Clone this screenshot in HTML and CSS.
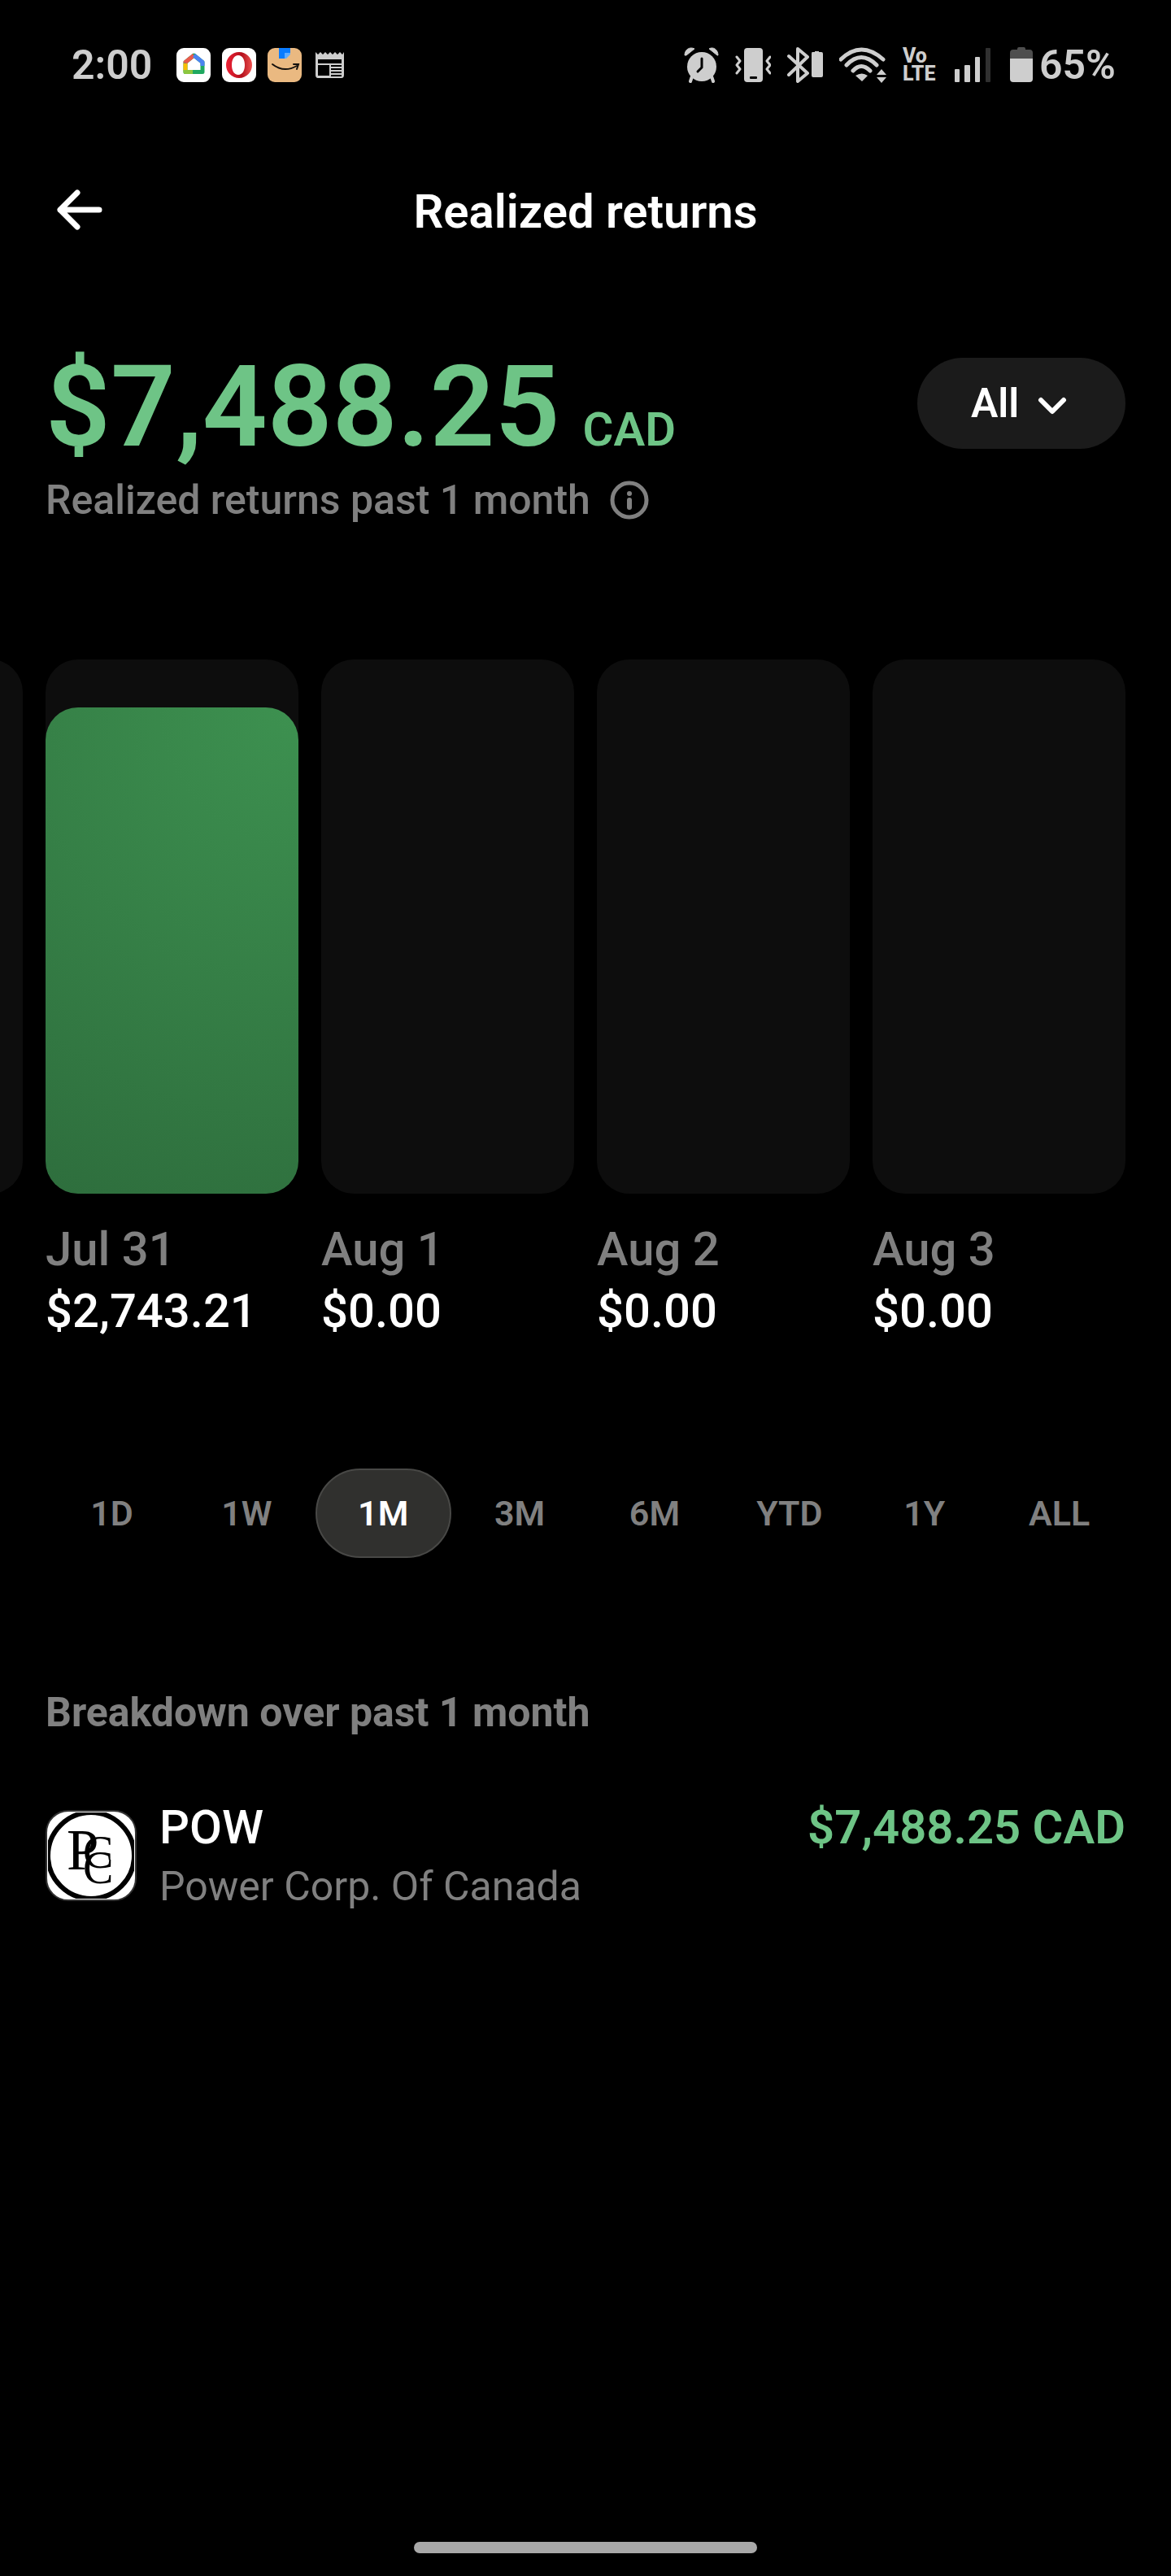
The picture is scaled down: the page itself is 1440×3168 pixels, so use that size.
FILE: index.html
```html
<!DOCTYPE html>
<html lang="en">
<head>
  <meta charset="UTF-8">
  <meta name="viewport" content="width=device-width, initial-scale=1.0">
  <title>Realized returns</title>
  <link rel="stylesheet" href="styles.css">
</head>
<body>
  <div class="status-bar">
    <span class="time">2:00</span>
    <div class="apps">
      <svg width="42" height="42" viewBox="0 0 42 42">
        <rect width="42" height="42" rx="9" fill="#fff"/>
        <path d="M21.500 9L32 17.500V29.500H11V17.500z" fill="none" stroke="#1fa860" stroke-width="5" stroke-linejoin="round"/>
        <path d="M11 19v9" stroke="#fbbc04" stroke-width="5"/>
        <path d="M11 27v2.500h9" stroke="#8cc63f" stroke-width="5" fill="none" stroke-linejoin="round"/>
        <path d="M11 18.500v-1L21.500 9" stroke="#ea5a4c" stroke-width="5" fill="none" stroke-linejoin="round"/>
        <path d="M21.500 9L32 17.500V22" stroke="#4b83f0" stroke-width="5" fill="none" stroke-linejoin="round"/>
      </svg>
      <svg width="42" height="42" viewBox="0 0 42 42">
        <defs>
          <linearGradient id="opera" x1="0" y1="0" x2="1" y2="0">
            <stop offset="0" stop-color="#ee2236"/>
            <stop offset="0.600" stop-color="#b3101c"/>
            <stop offset="1" stop-color="#ef5350"/>
          </linearGradient>
        </defs>
        <rect width="42" height="42" rx="9" fill="#fff"/>
        <path fill-rule="evenodd" fill="url(#opera)" d="M21 5a16 16 0 1 0 0 32a16 16 0 1 0 0-32zM20 9c5 0 8 5 8 12s-3 12-8 12s-8-5-8-12s3-12 8-12z"/>
      </svg>
      <svg width="42" height="42" viewBox="0 0 42 42">
        <rect width="42" height="42" rx="9" fill="#eab981"/>
        <path d="M14 0h14v6l-7 7h-7z" fill="#0a7cff"/>
        <path d="M28 6v2l-5 5h-2V6z" fill="#62adff"/>
        <path d="M6 20q14 11 30 2" stroke="#15110d" stroke-width="2" fill="none" stroke-linecap="round"/>
        <path d="M32 20l6 0l-2 6" stroke="#15110d" stroke-width="2" fill="none" stroke-linecap="round"/>
      </svg>
      <svg width="42" height="42" viewBox="0 0 42 42">
        <path fill="#cecece" fill-rule="evenodd" d="M3 5l3 3l3-3l3 3l3-3l3 3l3-3l3 3l3-3l3 3l3-3l3 3l2-3v28q0 4-3 4H6q-3 0-3-4zM6 14v5h29v-5zM6 21v13h14V21zM22 21v2h13v-2zM22 25v2h13v-2zM22 29v2h13v-2zM22 33v2h13v-2z"/>
      </svg>
    </div>
    <div class="system">
      <svg width="44" height="44" viewBox="0 0 44 44" fill="#cecece">
        <circle cx="23" cy="24" r="18"/>
        <path d="M11 36l-2 6M35 36l2 6" stroke="#cecece" stroke-width="4" stroke-linecap="round"/>
        <path d="M2 10C2 3 8-1 14 2L4 10zM43 10C43 3 37-1 32 2L42 10z" stroke="#cecece" stroke-width="1" stroke-linejoin="round"/>
        <path d="M23 14v11l-5 5" stroke="#000" stroke-width="3" fill="none" stroke-linecap="round"/>
      </svg>
      <svg width="44" height="44" viewBox="0 0 44 44" fill="none">
        <rect x="11" y="1" width="23" height="42" rx="4" fill="#cecece"/>
        <rect x="18" y="36" width="9" height="3" rx="1" fill="#000"/>
        <path d="M2 12l4 5l-4 5l4 5l-4 5M43 12l-4 5l4 5l-4 5l4 5" stroke="#cecece" stroke-width="3" stroke-linecap="round" stroke-linejoin="round"/>
      </svg>
      <svg width="44" height="44" viewBox="0 0 44 44" fill="none">
        <path d="M2 11l23 21l-12 10V2l12 10L2 34" stroke="#cecece" stroke-width="4" stroke-linecap="round" stroke-linejoin="round"/>
        <path d="M31 6h3V5h5v1h3q2 0 2 2v27q0 2-2 2H32q-2 0-2-2V8q0-2 1-2z" fill="#cecece"/>
      </svg>
      <svg width="58" height="44" viewBox="0 0 58 44" fill="none">
        <path d="M2 15Q27-9 54 15M9 22Q27 3 46 22M17 29Q27 18 38 29" stroke="#cecece" stroke-width="5" stroke-linecap="round"/>
        <path d="M20 35Q28 30 35 35L28 42zM46 34h12l-6-7zM46 37h12l-6 7z" fill="#cecece"/>
      </svg>
      <span class="volte">Vo<br>LTE</span>
      <svg width="48" height="44" viewBox="0 0 48 44" fill="#cecece">
        <rect x="0" y="27" width="6" height="16" rx="1"/>
        <rect x="12" y="22" width="7" height="21" rx="1"/>
        <rect x="25" y="12" width="6" height="31" rx="1"/>
        <rect x="38" y="1" width="6" height="42" rx="1" fill="#303030"/>
      </svg>
      <svg width="28" height="46" viewBox="0 0 28 46">
        <path d="M0 15V8q0-4 4-4h5V3q0-2 2-2h6q2 0 2 2v1h5q4 0 4 4v7z" fill="#4e4e4e"/>
        <path d="M0 15h28v25q0 4-4 4H4q-4 0-4-4z" fill="#cecece"/>
      </svg>
      <span class="percent">65%</span>
    </div>
  </div>

  <header class="header">
    <button class="back" aria-label="Back">
      <svg width="56" height="56" viewBox="0 0 56 56" fill="none" stroke="#fff" stroke-width="7" stroke-linecap="round" stroke-linejoin="round">
        <path d="M25 5L4 26L25 47M4 26H52"/>
      </svg>
    </button>
    <h1>Realized returns</h1>
  </header>

  <main>
    <section class="summary">
      <div>
        <div class="amount">
          <span>$7,488.25</span>
          <span class="currency">CAD</span>
        </div>
        <div class="note">
          <span>Realized returns past 1 month</span>
          <button class="info" aria-label="More information">
            <svg width="48" height="48" viewBox="0 0 48 48" fill="none">
              <circle cx="24" cy="24" r="21" stroke="#808080" stroke-width="5"/>
              <path d="M24 24v9" stroke="#808080" stroke-width="6" stroke-linecap="round"/>
              <circle cx="24" cy="16" r="3" fill="#808080"/>
            </svg>
          </button>
        </div>
      </div>
      <div class="filter">
        <select aria-label="Account">
          <option>All</option>
        </select>
        <svg class="chevron" width="36" height="24" viewBox="0 0 36 24" fill="none">
          <path d="M4 6L18 20L32 6" stroke="#fff" stroke-width="6" stroke-linecap="round" stroke-linejoin="round"/>
        </svg>
      </div>
    </section>

    <section class="chart">
      <div class="day">
        <div class="bar"></div>
      </div>
      <div class="day">
        <div class="bar"><div class="fill" style="height: 91%"></div></div>
        <div class="date">Jul 31</div>
        <div class="value">$2,743.21</div>
      </div>
      <div class="day">
        <div class="bar"></div>
        <div class="date">Aug 1</div>
        <div class="value">$0.00</div>
      </div>
      <div class="day">
        <div class="bar"></div>
        <div class="date">Aug 2</div>
        <div class="value">$0.00</div>
      </div>
      <div class="day">
        <div class="bar"></div>
        <div class="date">Aug 3</div>
        <div class="value">$0.00</div>
      </div>
    </section>

    <nav class="ranges">
      <button>1D</button>
      <button>1W</button>
      <button class="selected">1M</button>
      <button>3M</button>
      <button>6M</button>
      <button>YTD</button>
      <button>1Y</button>
      <button>ALL</button>
    </nav>

    <section class="breakdown">
      <h2>Breakdown over past 1 month</h2>
      <div class="holding">
        <svg class="logo" width="112" height="112" viewBox="0 0 112 112">
          <defs>
            <clipPath id="tile"><rect x="3" y="3" width="106" height="106" rx="25"/></clipPath>
          </defs>
          <rect x="1" y="1" width="110" height="110" rx="27" fill="#fff" stroke="#333" stroke-width="2"/>
          <circle cx="56" cy="56" r="53" fill="#fff" stroke="#000" stroke-width="6" clip-path="url(#tile)"/>
          <text x="26" y="73" font-size="71">P</text>
          <text x="46" y="71" font-size="56">C</text>
          <text x="46" y="90" font-size="56">C</text>
        </svg>
        <div class="name">
          <div class="ticker">POW</div>
          <div class="company">Power Corp. Of Canada</div>
        </div>
        <div class="gain">$7,488.25 CAD</div>
      </div>
    </section>
  </main>

  <div class="home-bar"></div>
</body>
</html>
```
FILE: styles.css
```css
* {
  box-sizing: border-box;
}
body {
  display: flex;
  flex-direction: column;
  min-height: 100vh;
  margin: 0;
  background-color: #000;
  color: #fff;
  font-family: Roboto, "Liberation Sans", sans-serif;
  font-weight: 500;
}
button, select {
  padding: 0;
  border: none;
  background: none;
  color: inherit;
  font: inherit;
  cursor: pointer;
}
svg {
  display: block;
  flex-shrink: 0;
}
h1, h2 {
  margin: 0;
}

/* status bar */
.status-bar {
  display: flex;
  align-items: center;
  height: 160px;
  padding: 0 68px 0 88px;
  color: #cecece;
  font-size: 50px;
  font-weight: 600;
}
.apps {
  display: flex;
  gap: 14px;
  margin-left: 30px;
}
.system {
  display: flex;
  align-items: center;
  gap: 20px;
  margin-left: auto;
}
.volte {
  width: 44px;
  font-size: 25px;
  font-weight: 800;
  line-height: 22px;
}
.percent {
  margin-left: -12px;
}

/* title */
.header {
  position: relative;
  display: flex;
  align-items: center;
  justify-content: center;
  height: 200px;
}
.header h1 {
  font-size: 58px;
  font-weight: 600;
}
.back {
  position: absolute;
  left: 70px;
}

.summary {
  display: flex;
  justify-content: space-between;
  align-items: flex-start;
  padding: 72px 56px 0;
}
.amount {
  display: flex;
  align-items: baseline;
  gap: 28px;
  color: #6ec486;
  font-size: 140px;
  font-weight: 600;
  line-height: 136px;
}
.currency {
  font-size: 58px;
  line-height: 58px;
}
.note {
  display: flex;
  align-items: center;
  gap: 24px;
  margin-top: 15px;
  color: #808080;
  font-size: 50px;
  line-height: 64px;
}
.filter {
  position: relative;
  margin-top: 8px;
}
.filter select {
  appearance: none;
  width: 256px;
  height: 112px;
  padding-left: 66px;
  border-radius: 56px;
  background-color: #1b1b1b;
  font-size: 50px;
  font-weight: 600;
}
.chevron {
  position: absolute;
  top: 46px;
  right: 72px;
  pointer-events: none;
}

/* daily bars, newest on the right, older ones run off the left edge */
.chart {
  display: flex;
  justify-content: flex-end;
  gap: 28px;
  margin-top: 164px;
  padding: 0 56px;
  overflow: hidden;
}
.day {
  flex: 0 0 calc((100% - 84px) / 4);
  font-size: 58px;
  line-height: 76px;
}
.bar {
  display: flex;
  align-items: flex-end;
  height: 657px;
  margin-bottom: 30px;
  border-radius: 40px;
  background-color: #0d0d0d;
}
.fill {
  width: 100%;
  border-radius: 40px;
  background: radial-gradient(circle farthest-corner at 100% 0, #3d9150, #2e6e3d);
}
.date {
  color: #808080;
}

.ranges {
  display: flex;
  gap: 3px;
  margin-top: 156px;
  padding: 0 56px;
}
.ranges button {
  flex: 1;
  height: 110px;
  border-radius: 55px;
  color: #808080;
  font-size: 43px;
  font-weight: 600;
}
.ranges .selected {
  border: 2px solid #484846;
  background-color: #30302e;
  color: #fff;
}

.breakdown {
  padding: 158px 56px 0;
}
.breakdown h2 {
  color: #808080;
  font-size: 50px;
  font-weight: 700;
  line-height: 64px;
}
.holding {
  display: flex;
  align-items: center;
  margin-top: 71px;
  font-size: 58px;
  line-height: 76px;
}
.logo {
  margin-right: 28px;
  font-family: "Liberation Serif", serif;
  font-weight: 400;
}
.company {
  color: #808080;
  font-size: 50px;
  font-weight: 400;
  line-height: 70px;
}
.gain {
  align-self: flex-start;
  margin-left: auto;
  color: #6ec486;
  font-weight: 600;
}

.home-bar {
  width: 422px;
  height: 14px;
  margin: auto auto 28px;
  border-radius: 7px;
  background-color: #a8a8a8;
}
```
